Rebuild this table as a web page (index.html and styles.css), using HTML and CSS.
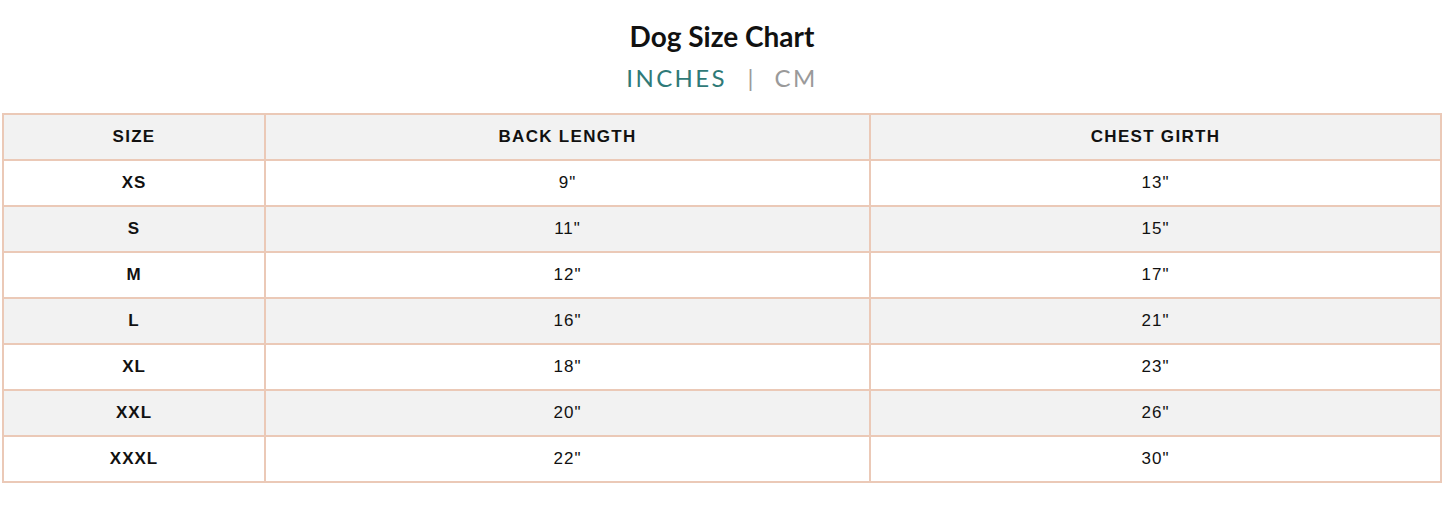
FILE: index.html
```html
<!DOCTYPE html>
<html>
<head>
<meta charset="utf-8">
<link rel="stylesheet" href="styles.css">
</head>
<body>
<div class="chart">
  <h2 class="title">Dog Size Chart</h2>
  <div class="units">
    <span class="unit active">INCHES</span>
    <span class="sep">|</span>
    <span class="unit">CM</span>
  </div>
  <table class="sizes">
    <colgroup>
      <col class="c1"><col class="c2"><col class="c3">
    </colgroup>
    <thead>
      <tr><th>SIZE</th><th>BACK LENGTH</th><th>CHEST GIRTH</th></tr>
    </thead>
    <tbody>
      <tr><td class="size">XS</td><td>9"</td><td>13"</td></tr>
      <tr class="alt"><td class="size">S</td><td>11"</td><td>15"</td></tr>
      <tr><td class="size">M</td><td>12"</td><td>17"</td></tr>
      <tr class="alt"><td class="size">L</td><td>16"</td><td>21"</td></tr>
      <tr><td class="size">XL</td><td>18"</td><td>23"</td></tr>
      <tr class="alt"><td class="size">XXL</td><td>20"</td><td>26"</td></tr>
      <tr><td class="size">XXXL</td><td>22"</td><td>30"</td></tr>
    </tbody>
  </table>
</div>
</body>
</html>
```
FILE: styles.css
```css
html, body {
  margin: 0;
  padding: 0;
  background: #fff;
}
.chart {
  padding: 18px 6px 0 2px;
  font-family: "Liberation Sans", Arial, sans-serif;
}
.title {
  margin: 0;
  text-align: center;
  font-family: Lato, "Open Sans", sans-serif;
  font-weight: 700;
  font-size: 28px;
  line-height: 36px;
  color: #111;
}
.units {
  text-align: center;
  font-family: Lato, "Open Sans", sans-serif;
  font-size: 24px;
  line-height: 32px;
  letter-spacing: 2.4px;
  margin-top: 8px;
  margin-bottom: 19px;
}
.unit { color: #9a9a9a; }
.unit.active { color: #2f7a78; }
.sep { color: #9a9a9a; margin: 0 10px 0 12px; }
.sizes {
  width: 100%;
  border-collapse: collapse;
  border: 2px solid #ebc9b7;
}
.c1 { width: 262px; }
.c2 { width: 605px; }
.c3 { width: auto; }
.sizes th, .sizes td {
  border: 2px solid #ebc9b7;
  height: 44px;
  padding: 0;
  text-align: center;
  font-size: 17px;
  color: #111;
}
.sizes th {
  background: #f2f2f2;
  font-weight: 700;
  letter-spacing: 1.3px;
}
.sizes td { letter-spacing: 1px; }
.sizes td.size { font-weight: 700; }
.sizes tr.alt td { background: #f2f2f2; }
```
